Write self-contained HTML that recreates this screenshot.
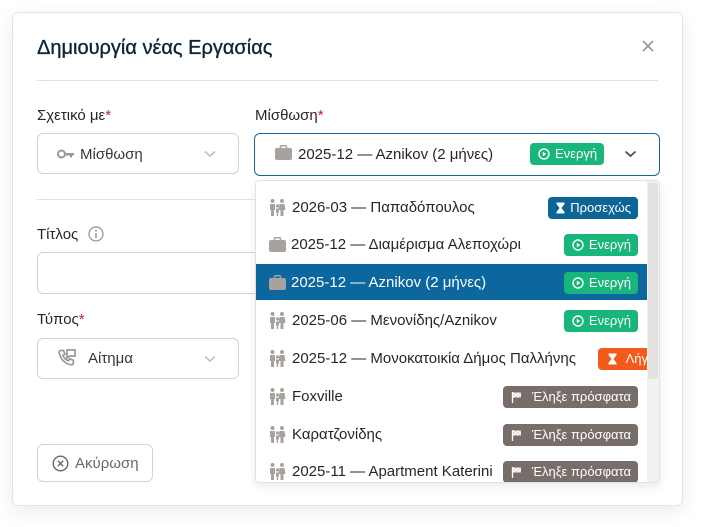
<!DOCTYPE html>
<html><head><meta charset="utf-8">
<style>
*{box-sizing:border-box;margin:0;padding:0}
body{width:701px;height:527px;background:#fff;font-family:"Liberation Sans","DejaVu Sans",sans-serif;position:relative;overflow:hidden;color:#2a2522}
.modal{position:absolute;left:12px;top:12px;width:671px;height:494px;background:#fff;border:1px solid #e6e4e2;border-radius:6px;box-shadow:0 6px 20px rgba(0,0,0,.08)}
.abs{position:absolute}
.title{left:37px;top:37px;font-size:20px;color:#0c2636;font-weight:normal;-webkit-text-stroke:0.35px #0c2636}
.hr{height:1px;background:#e3e1df}
.lbl{font-size:15px;color:#2a2522}
.lbl b{color:#d0202a;font-weight:normal}
.box{border:1px solid #d6d2cf;border-radius:6px;background:#fff}
.badge{position:absolute;right:11px;height:22px;border-radius:4px;color:#fff;font-size:13px;line-height:22px;padding:0 7px 0 8px;display:flex;align-items:center;gap:5px;white-space:nowrap;font-weight:500}
.g{background:#18b67b}.bl{background:#0d6596}.o{background:#f45a1c}.gr{background:#786e69}
.row{position:absolute;left:0;width:392px;height:38px;font-size:15px;display:flex;align-items:center;padding-left:13px;gap:5px;white-space:nowrap;padding-top:1px}
.sel{background:#0b679e;color:#fff}
svg{flex:none}
</style></head><body>
<div class="modal"></div>
<div class="abs title">Δημιουργία νέας Εργασίας</div>
<svg class="abs" style="left:642px;top:40px" width="12" height="12" viewBox="0 0 12 12"><path d="M1 1L11 11M11 1L1 11" stroke="#8e8a87" stroke-width="1.5"/></svg>
<div class="abs hr" style="left:37px;top:80px;width:621px"></div>

<div class="abs lbl" style="left:37px;top:107px">Σχετικό με<b>*</b></div>
<div class="abs lbl" style="left:255px;top:107px">Μίσθωση<b>*</b></div>

<div class="abs box" style="left:37px;top:133px;width:202px;height:41px"></div>
<svg class="abs" style="left:57px;top:149px" width="18" height="10" viewBox="0 0 18 10"><circle cx="4.5" cy="5" r="3.5" fill="none" stroke="#9e9894" stroke-width="2"/><path d="M8 4h9v2.5h-2v2h-2v-2h-5z" fill="#9e9894"/></svg>
<div class="abs" style="left:80px;top:146px;font-size:15px;color:#3a3431">Μίσθωση</div>
<svg class="abs" style="left:204px;top:150px" width="12" height="8" viewBox="0 0 12 8"><path d="M1 1.5l5 4.5 5-4.5" fill="none" stroke="#c4c0bd" stroke-width="1.6"/></svg>

<div class="abs" style="left:254px;top:133px;width:406px;height:43px;border:1px solid #17689a;border-radius:6px"></div>
<svg class="abs" style="left:275px;top:145px" width="17" height="15" viewBox="0 0 17 15"><rect x="5.5" y="0.8" width="6" height="3" rx="1" fill="none" stroke="#a8a29e" stroke-width="1.5"/><rect x="0" y="3" width="17" height="12" rx="2" fill="#a8a29e"/></svg>
<div class="abs" style="left:298px;top:146px;font-size:15px;color:#2a2522">2025-12 — Aznikov (2 μήνες)</div>
<div class="badge g" style="left:530px;right:auto;top:143px"><svg width="12" height="12" viewBox="0 0 12 12"><circle cx="6" cy="6" r="5" fill="none" stroke="#fff" stroke-width="1.4"/><path d="M4.8 3.8v4.4L8.2 6z" fill="#fff"/></svg>Ενεργή</div>
<svg class="abs" style="left:624px;top:150px" width="13" height="8" viewBox="0 0 13 8"><path d="M1.5 1.5l5 4.5 5-4.5" fill="none" stroke="#55504c" stroke-width="1.8"/></svg>

<div class="abs hr" style="left:37px;top:199px;width:218px"></div>
<div class="abs lbl" style="left:37px;top:226px">Τίτλος</div>
<svg class="abs" style="left:88px;top:226px" width="16" height="16" viewBox="0 0 16 16"><circle cx="8" cy="8" r="7" fill="none" stroke="#9a9591" stroke-width="1.3"/><circle cx="8" cy="4.8" r="1" fill="#9a9591"/><path d="M8 7v5" stroke="#9a9591" stroke-width="1.5"/></svg>
<div class="abs box" style="left:37px;top:252px;width:230px;height:42px"></div>

<div class="abs lbl" style="left:37px;top:311px">Τύπος<b>*</b></div>
<div class="abs box" style="left:37px;top:338px;width:202px;height:41px"></div>
<svg class="abs" style="left:58px;top:349px" width="19" height="19" viewBox="0 0 19 19"><path d="M2.5 1.5h3l1.5 3.5-2 1.3a9 9 0 0 0 5.5 5.5l1.3-2 3.5 1.5v3c0 1-1 1.5-2 1.4C7.5 15.4 2.2 10 1.2 3.5 1.1 2.5 1.6 1.5 2.5 1.5z" fill="none" stroke="#9e9894" stroke-width="1.7"/><path d="M9 1h8v6h-5l-3 2z" fill="none" stroke="#9e9894" stroke-width="1.7"/></svg>
<div class="abs" style="left:88px;top:350px;font-size:15px;color:#3a3431">Αίτημα</div>
<svg class="abs" style="left:204px;top:355px" width="12" height="8" viewBox="0 0 12 8"><path d="M1 1.5l5 4.5 5-4.5" fill="none" stroke="#c4c0bd" stroke-width="1.6"/></svg>

<div class="abs box" style="left:37px;top:444px;width:116px;height:38px;display:flex;align-items:center;padding-left:14px;gap:6px;font-size:15px;color:#6e6763"><svg width="17" height="17" viewBox="0 0 17 17"><circle cx="8.5" cy="8.5" r="7.3" fill="none" stroke="#6e6763" stroke-width="1.4"/><path d="M5.8 5.8l5.4 5.4M11.2 5.8l-5.4 5.4" stroke="#6e6763" stroke-width="1.4"/></svg>Ακύρωση</div>

<div class="abs" style="left:255px;top:180px;width:405px;height:303px;background:#fff;border:1px solid #e4e2e0;border-radius:4px;box-shadow:0 4px 10px rgba(0,0,0,.08);overflow:hidden">
 <div class="abs" style="left:391px;top:0;width:13px;height:303px;background:#f2f1f0"></div>
 <div class="abs" style="left:392px;top:2px;width:10px;height:196px;background:#e3e1df;border-radius:3px"></div>
 <div style="position:absolute;left:0;top:0;width:391px;height:303px;overflow:hidden">
 <div class="row" style="top:7px"><svg width="18" height="17" viewBox="0 0 18 17"><g fill="#a8a29e"><circle cx="3.5" cy="2" r="2"/><circle cx="13" cy="2" r="2"/><circle cx="8.5" cy="7" r="1.6"/><path d="M1 5h5v6H5v6H2v-6H1z"/><path d="M10.5 5h5l1 6h-2v6h-3v-6h-2z"/><path d="M7 9.5h3v4H9.2v3.5H7.8v-3.5H7z"/></g></svg>2026-03 — Παπαδόπουλος<div class="badge bl" style="right:10px"><svg width="9" height="12" viewBox="0 0 9 12"><path d="M0.5 0.5h8v1.5L5.5 6l3 4v1.5h-8V10l3-4-3-4z" fill="#fff"/></svg>Προσεχώς</div></div>
 <div class="row" style="top:44px"><svg width="17" height="15" viewBox="0 0 17 15"><rect x="5.5" y="0.8" width="6" height="3" rx="1" fill="none" stroke="#a8a29e" stroke-width="1.5"/><rect x="0" y="3" width="17" height="12" rx="2" fill="#a8a29e"/></svg>2025-12 — Διαμέρισμα Αλεποχώρι<div class="badge g" style="right:10px"><svg width="12" height="12" viewBox="0 0 12 12"><circle cx="6" cy="6" r="5" fill="none" stroke="#fff" stroke-width="1.4"/><path d="M4.8 3.8v4.4L8.2 6z" fill="#fff"/></svg>Ενεργή</div></div>
 <div class="row sel" style="top:83px;height:36px"><svg width="17" height="15" viewBox="0 0 17 15"><rect x="5.5" y="0.8" width="6" height="3" rx="1" fill="none" stroke="#a8a29e" stroke-width="1.5"/><rect x="0" y="3" width="17" height="12" rx="2" fill="#a8a29e"/></svg>2025-12 — Aznikov (2 μήνες)<div class="badge g" style="right:10px"><svg width="12" height="12" viewBox="0 0 12 12"><circle cx="6" cy="6" r="5" fill="none" stroke="#fff" stroke-width="1.4"/><path d="M4.8 3.8v4.4L8.2 6z" fill="#fff"/></svg>Ενεργή</div></div>
 <div class="row" style="top:120px"><svg width="18" height="17" viewBox="0 0 18 17"><g fill="#a8a29e"><circle cx="3.5" cy="2" r="2"/><circle cx="13" cy="2" r="2"/><circle cx="8.5" cy="7" r="1.6"/><path d="M1 5h5v6H5v6H2v-6H1z"/><path d="M10.5 5h5l1 6h-2v6h-3v-6h-2z"/><path d="M7 9.5h3v4H9.2v3.5H7.8v-3.5H7z"/></g></svg>2025-06 — Μενονίδης/Aznikov<div class="badge g" style="right:10px"><svg width="12" height="12" viewBox="0 0 12 12"><circle cx="6" cy="6" r="5" fill="none" stroke="#fff" stroke-width="1.4"/><path d="M4.8 3.8v4.4L8.2 6z" fill="#fff"/></svg>Ενεργή</div></div>
 <div class="row" style="top:158px"><svg width="18" height="17" viewBox="0 0 18 17"><g fill="#a8a29e"><circle cx="3.5" cy="2" r="2"/><circle cx="13" cy="2" r="2"/><circle cx="8.5" cy="7" r="1.6"/><path d="M1 5h5v6H5v6H2v-6H1z"/><path d="M10.5 5h5l1 6h-2v6h-3v-6h-2z"/><path d="M7 9.5h3v4H9.2v3.5H7.8v-3.5H7z"/></g></svg>2025-12 — Μονοκατοικία Δήμος Παλλήνης<div class="badge o" style="left:342px;right:auto;padding-left:10px"><svg width="9" height="12" viewBox="0 0 9 12"><path d="M0.5 0.5h8v1.5L5.5 6l3 4v1.5h-8V10l3-4-3-4z" fill="#fff"/></svg>&nbsp;Λήγει</div></div>
 <div class="row" style="top:196px"><svg width="18" height="17" viewBox="0 0 18 17"><g fill="#a8a29e"><circle cx="3.5" cy="2" r="2"/><circle cx="13" cy="2" r="2"/><circle cx="8.5" cy="7" r="1.6"/><path d="M1 5h5v6H5v6H2v-6H1z"/><path d="M10.5 5h5l1 6h-2v6h-3v-6h-2z"/><path d="M7 9.5h3v4H9.2v3.5H7.8v-3.5H7z"/></g></svg>Foxville<div class="badge gr" style="right:10px"><svg width="12" height="12" viewBox="0 0 12 12"><path d="M1.5 1v11" stroke="#fff" stroke-width="1.3"/><path d="M2 1.5h8v5H2z" fill="#ddd"/><path d="M2 1.5h2v1.7H2zM6 1.5h2v1.7H6zM4 3.2h2v1.6H4zM8 3.2h2v1.6H8zM2 4.8h2v1.7H2zM6 4.8h2v1.7H6z" fill="#fff"/></svg>&nbsp;Έληξε πρόσφατα</div></div>
 <div class="row" style="top:234px"><svg width="18" height="17" viewBox="0 0 18 17"><g fill="#a8a29e"><circle cx="3.5" cy="2" r="2"/><circle cx="13" cy="2" r="2"/><circle cx="8.5" cy="7" r="1.6"/><path d="M1 5h5v6H5v6H2v-6H1z"/><path d="M10.5 5h5l1 6h-2v6h-3v-6h-2z"/><path d="M7 9.5h3v4H9.2v3.5H7.8v-3.5H7z"/></g></svg>Καρατζονίδης<div class="badge gr" style="right:10px"><svg width="12" height="12" viewBox="0 0 12 12"><path d="M1.5 1v11" stroke="#fff" stroke-width="1.3"/><path d="M2 1.5h8v5H2z" fill="#ddd"/><path d="M2 1.5h2v1.7H2zM6 1.5h2v1.7H6zM4 3.2h2v1.6H4zM8 3.2h2v1.6H8zM2 4.8h2v1.7H2zM6 4.8h2v1.7H6z" fill="#fff"/></svg>&nbsp;Έληξε πρόσφατα</div></div>
 <div class="row" style="top:271px"><svg width="18" height="17" viewBox="0 0 18 17"><g fill="#a8a29e"><circle cx="3.5" cy="2" r="2"/><circle cx="13" cy="2" r="2"/><circle cx="8.5" cy="7" r="1.6"/><path d="M1 5h5v6H5v6H2v-6H1z"/><path d="M10.5 5h5l1 6h-2v6h-3v-6h-2z"/><path d="M7 9.5h3v4H9.2v3.5H7.8v-3.5H7z"/></g></svg>2025-11 — Apartment Katerini<div class="badge gr" style="right:10px"><svg width="12" height="12" viewBox="0 0 12 12"><path d="M1.5 1v11" stroke="#fff" stroke-width="1.3"/><path d="M2 1.5h8v5H2z" fill="#ddd"/><path d="M2 1.5h2v1.7H2zM6 1.5h2v1.7H6zM4 3.2h2v1.6H4zM8 3.2h2v1.6H8zM2 4.8h2v1.7H2zM6 4.8h2v1.7H6z" fill="#fff"/></svg>&nbsp;Έληξε πρόσφατα</div></div>
 </div>
</div>
</body></html>
